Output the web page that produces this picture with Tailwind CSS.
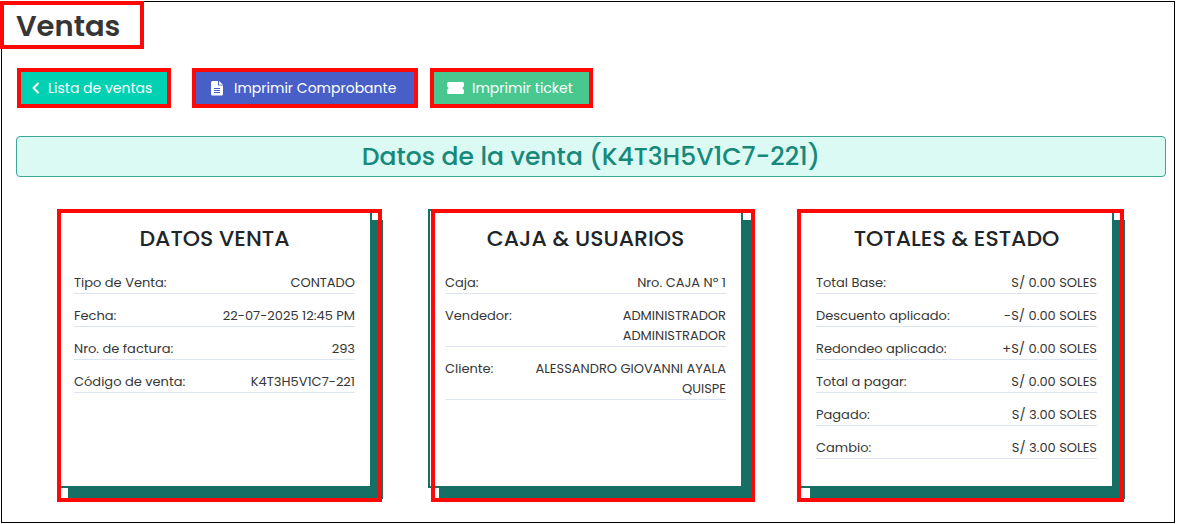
<!DOCTYPE html>
<html lang="es">
<head>
    <meta charset="UTF-8">
    <meta name="viewport" content="width=device-width, initial-scale=1.0">
    <title>Ventas</title>
    <script src="https://cdn.jsdelivr.net/npm/@tailwindcss/browser@4"></script>
</head>
<body class="bg-white font-[Poppins,Inter,sans-serif] text-[#363636]">

<div class="m-px mr-0.5 border border-black pb-[21px]">
    <header class="flex">
        <h1 class="-ml-0.5 -mt-px w-36 h-12 pl-3 border-4 border-[#ff0808] text-[29px] leading-[42px] font-semibold">Ventas</h1>
    </header>

    <nav class="flex mt-[19px] pl-[15px] text-sm text-white">
        <a href="#" class="flex items-center h-10 w-[154px] pl-[11px] mr-[21px] border-4 border-[#ff0808] bg-[#00d1b2] whitespace-nowrap">
            <svg class="w-2 h-3 mr-2 shrink-0" viewBox="0 0 8 12" fill="none" stroke="currentColor" stroke-width="2" stroke-linecap="round" stroke-linejoin="round"><path d="M6 1.5L1.5 6L6 10.5"/></svg>
            Lista de ventas
        </a>
        <button type="button" class="flex items-center h-10 w-[226px] pl-[15px] mr-3 border-4 border-[#ff0808] bg-[#485fc7] whitespace-nowrap">
            <svg class="w-3 h-4 mr-[11px] shrink-0" viewBox="0 0 12 16"><path fill="currentColor" d="M1.5 1H7v4.5h5V14a1.5 1.5 0 0 1-1.5 1.5h-9A1.5 1.5 0 0 1 0 14V2.5A1.5 1.5 0 0 1 1.5 1zM8 1l4 3.7H8z"/><path d="M3 8.5h6M3 10.5h6M3 12.5h6" stroke="#485fc7" stroke-width="1"/></svg>
            Imprimir Comprobante
        </button>
        <button type="button" class="flex items-center h-10 w-[163px] pl-[13px] border-4 border-[#ff0808] bg-[#48c78e] whitespace-nowrap">
            <svg class="w-[17px] h-3 mr-2 shrink-0" viewBox="0 0 17 12"><path fill="currentColor" d="M1.500 0h14A1.500 1.500 0 0 1 17 1.500v3a1.500 1.500 0 0 0 0 3v3a1.500 1.500 0 0 1-1.500 1.500h-14A1.500 1.500 0 0 1 0 10.500v-3a1.500 1.500 0 0 0 0-3v-3A1.500 1.500 0 0 1 1.500 0z"/></svg>
            Imprimir ticket
        </button>
    </nav>

    <h2 class="mt-7 ml-[14px] mr-2 border border-[#3da596] rounded bg-[#dafaf3] text-center text-[25px] leading-[39px] font-medium text-[#16897b]">Datos de la venta (K4T3H5V1C7-221)</h2>

    <main class="grid grid-cols-3 gap-14 mt-8 ml-[55px] mr-[60px] pb-[13px] text-[13px] leading-5">
        <section class="relative h-[279px] px-[15px] pt-3.5 border-2 border-[#166f65] bg-white shadow-[11px_11px_0_0_#166f65]">
            <div class="absolute -top-0.5 -bottom-4 -left-0.5 -right-3 border-4 border-[#ff0808] pointer-events-none"></div>
            <h3 class="mb-5 text-center text-[22px] leading-7 font-medium text-[#212529]">DATOS VENTA</h3>
            <dl class="space-y-3">
                <div class="flex justify-between border-b border-[#dbe4f0]"><dt>Tipo de Venta:</dt><dd>CONTADO</dd></div>
                <div class="flex justify-between border-b border-[#dbe4f0]"><dt>Fecha:</dt><dd>22-07-2025 12:45 PM</dd></div>
                <div class="flex justify-between border-b border-[#dbe4f0]"><dt>Nro. de factura:</dt><dd>293</dd></div>
                <div class="flex justify-between border-b border-[#dbe4f0]"><dt>Código de venta:</dt><dd>K4T3H5V1C7-221</dd></div>
            </dl>
        </section>

        <section class="relative h-[279px] px-[15px] pt-3.5 border-2 border-[#166f65] bg-white shadow-[11px_11px_0_0_#166f65]">
            <div class="absolute -top-0.5 -bottom-4 left-px -right-3.5 border-4 border-[#ff0808] pointer-events-none"></div>
            <h3 class="mb-5 text-center text-[22px] leading-7 font-medium text-[#212529]">CAJA &amp; USUARIOS</h3>
            <dl class="space-y-3">
                <div class="flex justify-between border-b border-[#dbe4f0]"><dt>Caja:</dt><dd>Nro. CAJA Nº 1</dd></div>
                <div class="flex justify-between border-b border-[#dbe4f0]"><dt>Vendedor:</dt><dd class="text-right">ADMINISTRADOR<br>ADMINISTRADOR</dd></div>
                <div class="flex justify-between border-b border-[#dbe4f0]"><dt>Cliente:</dt><dd class="text-right">ALESSANDRO GIOVANNI AYALA<br>QUISPE</dd></div>
            </dl>
        </section>

        <section class="relative h-[279px] px-[15px] pt-3.5 border-2 border-[#166f65] bg-white shadow-[11px_11px_0_0_#166f65]">
            <div class="absolute -top-0.5 -bottom-4 -left-1 -right-3 border-4 border-[#ff0808] pointer-events-none"></div>
            <h3 class="mb-5 text-center text-[22px] leading-7 font-medium text-[#212529]">TOTALES &amp; ESTADO</h3>
            <dl class="space-y-3">
                <div class="flex justify-between border-b border-[#dbe4f0]"><dt>Total Base:</dt><dd>S/ 0.00 SOLES</dd></div>
                <div class="flex justify-between border-b border-[#dbe4f0]"><dt>Descuento aplicado:</dt><dd>-S/ 0.00 SOLES</dd></div>
                <div class="flex justify-between border-b border-[#dbe4f0]"><dt>Redondeo aplicado:</dt><dd>+S/ 0.00 SOLES</dd></div>
                <div class="flex justify-between border-b border-[#dbe4f0]"><dt>Total a pagar:</dt><dd>S/ 0.00 SOLES</dd></div>
                <div class="flex justify-between border-b border-[#dbe4f0]"><dt>Pagado:</dt><dd>S/ 3.00 SOLES</dd></div>
                <div class="flex justify-between border-b border-[#dbe4f0]"><dt>Cambio:</dt><dd>S/ 3.00 SOLES</dd></div>
            </dl>
        </section>
    </main>
</div>
</body>
</html>
